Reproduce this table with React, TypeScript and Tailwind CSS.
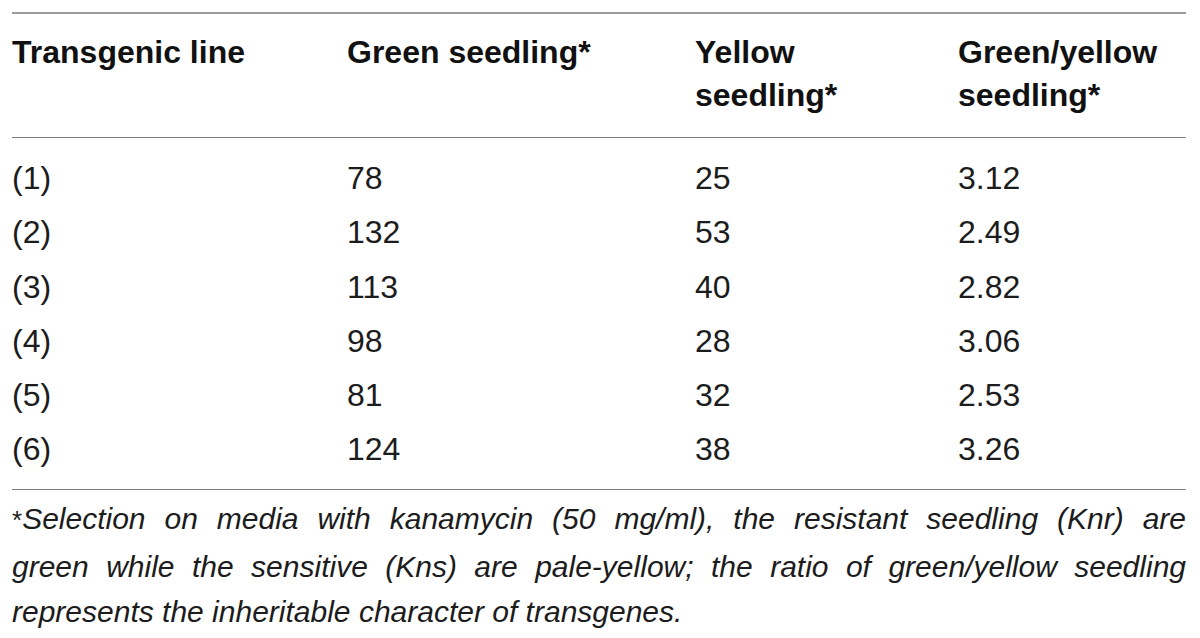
import React from "react";

const rows = [
  ["(1)", "78", "25", "3.12"],
  ["(2)", "132", "53", "2.49"],
  ["(3)", "113", "40", "2.82"],
  ["(4)", "98", "28", "3.06"],
  ["(5)", "81", "32", "2.53"],
  ["(6)", "124", "38", "3.26"],
];

export default function App() {
  return (
    <div className="w-[1200px] h-[638px] bg-white overflow-hidden" style={{ fontFamily: '"Liberation Sans", Arial, sans-serif' }}>
      <div className="ml-[12px] mr-[14px] pt-[12px]">
        <div className="h-[1.5px] bg-[#9c9c9c]" />
        <div className="grid grid-cols-[335px_348px_263px_1fr] pt-[17px] pb-[20px] text-[32px] leading-[43px] font-bold text-[#111]">
          <div>Transgenic line</div>
          <div>Green seedling*</div>
          <div>
            Yellow
            <br />
            seedling*
          </div>
          <div>
            Green/yellow
            <br />
            seedling*
          </div>
        </div>
        <div className="h-[1.5px] bg-[#7c7c7c]" />
        <div className="pt-[13px] pb-[12px] text-[32px] text-[#1c1c1c]">
          {rows.map((r) => (
            <div key={r[0]} className="grid grid-cols-[335px_348px_263px_1fr] h-[54.3px] leading-[54.3px]">
              {r.map((c, i) => (
                <div key={i}>{c}</div>
              ))}
            </div>
          ))}
        </div>
        <div className="h-[1.5px] bg-[#7c7c7c]" />
        <div className="pt-[6px] text-[30px] leading-[45.5px] italic text-[#1c1c1c]">
          <div className="whitespace-nowrap text-justify [text-align-last:justify]">
            <span className="not-italic text-[26px]">*</span>Selection on media with kanamycin (50 mg/ml), the resistant seedling (Knr) are
          </div>
          <div className="whitespace-nowrap text-justify [text-align-last:justify]">
            green while the sensitive (Kns) are pale-yellow; the ratio of green/yellow seedling
          </div>
          <div className="whitespace-nowrap">represents the inheritable character of transgenes.</div>
        </div>
      </div>
    </div>
  );
}
